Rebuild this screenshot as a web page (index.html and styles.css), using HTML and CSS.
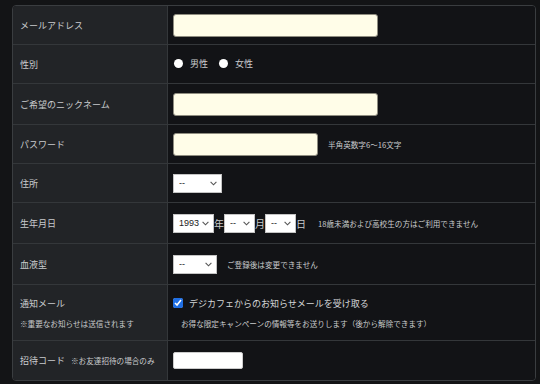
FILE: index.html
```html
<!DOCTYPE html>
<html lang="ja">
<head>
    <meta charset="UTF-8">
    <meta name="viewport" content="width=device-width, initial-scale=1.0">
    <title>会員登録</title>
    <link rel="stylesheet" href="styles.css">
</head>
<body>
    <table class="form-table">
        <tr>
            <th>メールアドレス</th>
            <td><input type="text" class="text-input wide"></td>
        </tr>
        <tr>
            <th>性別</th>
            <td>
                <label class="radio"><input type="radio" name="sex"> 男性</label>
                <label class="radio"><input type="radio" name="sex"> 女性</label>
            </td>
        </tr>
        <tr class="row-tall">
            <th>ご希望のニックネーム</th>
            <td><input type="text" class="text-input wide"></td>
        </tr>
        <tr>
            <th>パスワード</th>
            <td><input type="password" class="text-input narrow"><span class="note">半角英数字6～16文字</span></td>
        </tr>
        <tr>
            <th>住所</th>
            <td>
                <select class="sel sel-pref"><option>--</option></select>
            </td>
        </tr>
        <tr class="row-tall">
            <th>生年月日</th>
            <td class="birth">
                <select class="sel sel-year"><option>1993</option></select><span class="unit">年</span><select class="sel sel-small"><option>--</option></select><span class="unit">月</span><select class="sel sel-small"><option>--</option></select><span class="unit">日</span>
                <span class="note">18歳未満および高校生の方はご利用できません</span>
            </td>
        </tr>
        <tr class="row-tall">
            <th>血液型</th>
            <td>
                <select class="sel sel-blood"><option>--</option></select><span class="note">ご登録後は変更できません</span>
            </td>
        </tr>
        <tr class="row-mail">
            <th>
                <div>通知メール</div>
                <div class="sub">※重要なお知らせは送信されます</div>
            </th>
            <td>
                <label class="check"><input type="checkbox" checked> デジカフェからのお知らせメールを受け取る</label>
                <div class="sub indent">お得な限定キャンペーンの情報等をお送りします（後から解除できます）</div>
            </td>
        </tr>
        <tr class="row-last">
            <th>招待コード <span class="small">※お友達招待の場合のみ</span></th>
            <td><input type="text" class="text-input code"></td>
        </tr>
    </table>
</body>
</html>
```

FILE: styles.css
```css
body {
    margin: 0;
    padding: 5px 4px 0 12px;
    background-color: #131416;
    color: #c9cbcd;
    font-family: "Noto Sans CJK JP", "Liberation Sans", sans-serif;
    font-size: 9px;
}

.form-table {
    width: 524px;
    border-collapse: separate;
    border-spacing: 0;
    border: 1px solid #3a3d40;
    border-radius: 4px;
    overflow: hidden;
}

.form-table th,
.form-table td {
    height: 38px;
    padding: 0 5px;
    border-bottom: 1px solid #34373a;
    vertical-align: middle;
    text-align: left;
    font-weight: normal;
}

.form-table tr:last-child th,
.form-table tr:last-child td {
    border-bottom: none;
}

.form-table th {
    width: 142px;
    padding-left: 7px;
    background-color: #222427;
    border-right: 1px solid #34373a;
}

.form-table td {
    background-color: #121316;
}

.form-table .row-tall th,
.form-table .row-tall td {
    height: 40px;
}

.form-table .row-mail th,
.form-table .row-mail td {
    height: 55px;
}

.form-table .row-last th,
.form-table .row-last td {
    height: 39px;
}

.text-input {
    box-sizing: border-box;
    height: 23px;
    border: 1px solid #8f8d80;
    border-radius: 3px;
    background-color: #fffde8;
    vertical-align: middle;
    margin: 0;
}

.wide {
    width: 205px;
}

.narrow {
    width: 145px;
}

.code {
    width: 70px;
    height: 17px;
    background-color: #fff;
    border-color: #ccc;
    border-radius: 2px;
}

.note {
    font-size: 7.6px;
    margin-left: 10px;
    vertical-align: middle;
}

.radio {
    margin-right: 8px;
    display: inline-flex;
    align-items: center;
}

.radio input {
    appearance: none;
    width: 9px;
    height: 9px;
    margin: 0 7px 0 1px;
    border-radius: 50%;
    background-color: #fff;
}

.check {
    display: flex;
    align-items: center;
    color: #d4d6d8;
}

.check input {
    width: 10px;
    height: 10px;
    margin: 0 6px 0 0;
    accent-color: #1f6fe5;
}

.sub {
    font-size: 7.6px;
    margin-top: 8px;
}

.indent {
    padding-left: 8px;
}

.small {
    font-size: 7.6px;
    margin-left: 4px;
}

.sel {
    appearance: none;
    box-sizing: border-box;
    height: 19px;
    padding: 0 0 0 5px;
    font-family: "Liberation Sans", sans-serif;
    font-size: 9px;
    color: #222;
    background-color: #fff;
    background-image: url("data:image/svg+xml,%3Csvg xmlns='http://www.w3.org/2000/svg' width='7' height='5' viewBox='0 0 7 5'%3E%3Cpath d='M0.6 0.8 L3.5 3.8 L6.4 0.8' fill='none' stroke='%23555' stroke-width='1.1'/%3E%3C/svg%3E");
    background-repeat: no-repeat;
    background-position: right 4px center;
    border: 1px solid #c4c4c4;
    border-radius: 0;
    vertical-align: middle;
    margin: 0;
}

.sel-pref {
    width: 49px;
}

.sel-year {
    width: 41px;
}

.sel-small {
    width: 31px;
}

.sel-blood {
    width: 44px;
}

.unit {
    font-size: 10px;
    vertical-align: middle;
}

.birth .note {
    margin-left: 10px;
}
```
